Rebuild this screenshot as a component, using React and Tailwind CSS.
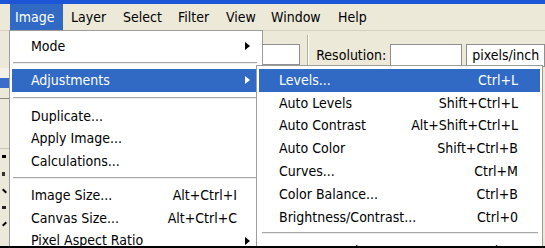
import React from 'react';

const font = "font-['DejaVu_Sans_Condensed','DejaVu_Sans',sans-serif]";

const barItems = [
  { label: 'Image', w: 'w-[53px] mr-[3px]', active: true },
  { label: 'Layer', w: 'w-[52px]' },
  { label: 'Select', w: 'w-[55px]' },
  { label: 'Filter', w: 'w-[48px]' },
  { label: 'View', w: 'w-[45px]' },
  { label: 'Window', w: 'w-[67px]' },
  { label: 'Help', w: 'w-[50px]' },
];

const mainMenu = [
  { label: 'Mode', arrow: true },
  { sep: 'pt-[4.5px] h-[11.5px]' },
  { label: 'Adjustments', arrow: true, active: true },
  { sep: 'pt-[5.5px] h-[13.5px]' },
  { label: 'Duplicate...' },
  { label: 'Apply Image...' },
  { label: 'Calculations...' },
  { sep: 'pt-[4.5px] h-[12px]' },
  { label: 'Image Size...', shortcut: 'Alt+Ctrl+I' },
  { label: 'Canvas Size...', shortcut: 'Alt+Ctrl+C' },
  { label: 'Pixel Aspect Ratio', arrow: true },
];

const subMenu = [
  { label: 'Levels...', shortcut: 'Ctrl+L', active: true },
  { label: 'Auto Levels', shortcut: 'Shift+Ctrl+L' },
  { label: 'Auto Contrast', shortcut: 'Alt+Shift+Ctrl+L' },
  { label: 'Auto Color', shortcut: 'Shift+Ctrl+B' },
  { label: 'Curves...', shortcut: 'Ctrl+M' },
  { label: 'Color Balance...', shortcut: 'Ctrl+B' },
  { label: 'Brightness/Contrast...', shortcut: 'Ctrl+0' },
  { sep: 'pt-[3.5px] h-[11.5px]' },
  { label: 'Hue/Saturation...', shortcut: 'Ctrl+U' },
];

const Arrow = ({ white }) => (
  <span
    className={`w-0 h-0 border-y-[4px] border-y-transparent border-l-[5px] ${white ? 'border-l-white' : 'border-l-black'}`}
  />
);

const Separator = ({ cls, inset }) => (
  <div className={cls}>
    <div className={`h-px bg-[#a6a6a6] ${inset}`} />
    <div className={`h-px bg-[#ededed] ${inset}`} />
  </div>
);

const App = () => {
  return (
    <div className={`relative w-[545px] h-[248px] overflow-hidden bg-[#ece9d8] text-black text-[14px] ${font}`}>
      {/* title bar edge */}
      <div className="h-[4px] bg-[#1c56d6]" />

      {/* menu bar */}
      <div className="h-[26px] flex pl-[10px] bg-[#ece9d8]">
        {barItems.map(item => (
          <div
            key={item.label}
            className={`${item.w} h-full flex items-center pl-[5px] ${item.active ? 'bg-[#316ac5] text-white' : ''}`}
          >
            {item.label}
          </div>
        ))}
      </div>

      {/* options bar */}
      <div className="h-[38px] flex items-start border-t border-[#d6d2c2] bg-[#ece9d8]">
        <div className="w-[262px]" />
        <div className="mt-[13px] w-[43px] h-[21px] bg-white border border-[#8f8f8f]" />
        <div className="ml-[7px] mt-[4px] w-[2px] h-[34px] border-l border-[#b5b09c] border-r border-r-white" />
        <div className="ml-[7px] mt-[17px] leading-none text-[14px]">Resolution:</div>
        <div className="ml-[4px] mt-[13px] w-[73px] h-[22px] bg-white border border-[#8f8f8f]" />
        <div className="ml-[4px] mt-[13px] w-[80px] h-[23px] bg-white border border-[#8f8f8f] pl-[5px] pt-[3px] leading-none">
          pixels/inch
        </div>
      </div>

      {/* workspace with tool strip */}
      <div className="flex h-[180px]">
        <div className="w-[9px] flex flex-col">
          <div className="h-[10px] bg-[#f4f2e8]" />
          <div className="h-[10px] bg-[#3a6ccc]" />
          <div className="h-[11px] border-b border-[#8a8878]" />
          <div className="h-[50px] border-b border-[#c9c5b4]" />
          <div className="flex flex-col gap-[14px] pl-[2px] pt-[6px]">
            <span className="w-[4px] h-[3px] bg-black" />
            <span className="w-[3px] h-[4px] bg-[#333]" />
            <span className="w-[5px] h-[2px] bg-black rotate-45" />
            <span className="w-[4px] h-[3px] bg-[#222]" />
            <span className="w-[5px] h-[2px] bg-black -rotate-45" />
          </div>
        </div>
        <div className="flex-1 bg-[#ece9d8]" />
      </div>

      {/* Image menu */}
      <div className="absolute left-[9px] top-[30px] w-[254px] h-[230px] bg-white border border-[#9d9d9d] pt-[4px]">
        {mainMenu.map((item, i) =>
          item.sep ? (
            <Separator key={i} cls={item.sep} inset="ml-[3px] mr-[5px]" />
          ) : (
            <div
              key={item.label}
              className={`h-[22.5px] mx-[2px] flex items-center pl-[19px] pr-[10px] ${item.active ? 'bg-[#316ac5] text-white' : ''}`}
            >
              <span className="flex-1">{item.label}</span>
              {item.shortcut && <span>{item.shortcut}</span>}
              <span className="w-[13px] flex justify-end">{item.arrow && <Arrow white={item.active} />}</span>
            </div>
          )
        )}
      </div>

      {/* Adjustments submenu */}
      <div className="absolute left-[256px] top-[65px] w-[287px] h-[200px] bg-white border border-[#9d9d9d] pt-[3px]">
        {subMenu.map((item, i) =>
          item.sep ? (
            <Separator key={i} cls={item.sep} inset="ml-[5px] mr-[4px]" />
          ) : (
            <div
              key={item.label}
              className={`h-[22.8px] mx-[2px] flex items-center pl-[20px] pr-[22px] ${item.active ? 'bg-[#316ac5] text-white' : ''}`}
            >
              <span className="flex-1">{item.label}</span>
              <span>{item.shortcut}</span>
            </div>
          )
        )}
      </div>

      {/* bottom edge of the capture */}
      <div className="absolute left-0 bottom-0 w-full h-[2px] bg-black" />
    </div>
  );
};

export default App;
